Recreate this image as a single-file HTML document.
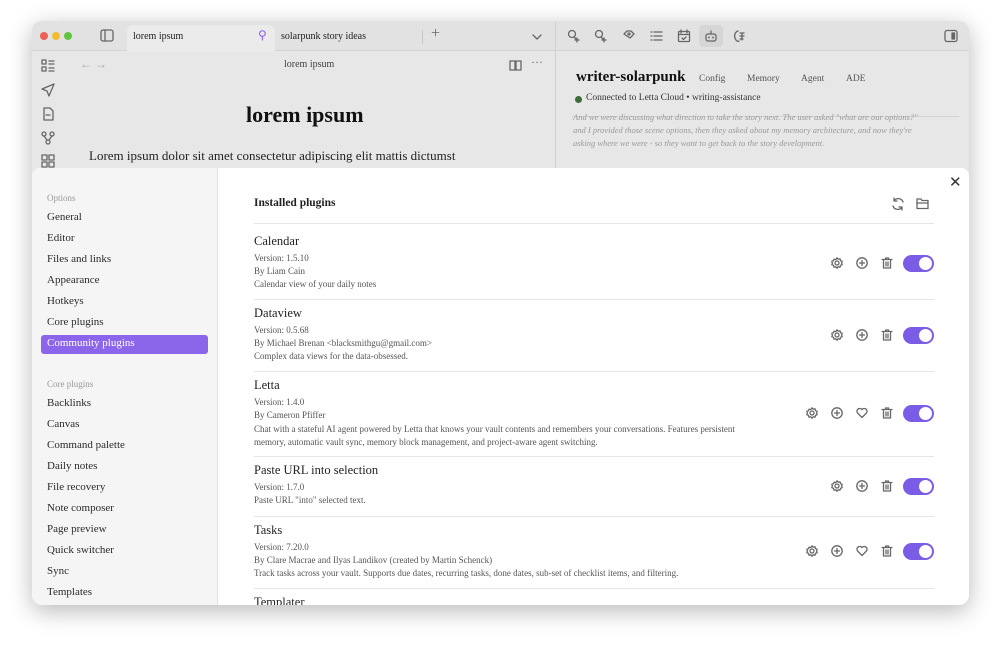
<!DOCTYPE html>
<html><head><meta charset="utf-8">
<style>
*{box-sizing:border-box;margin:0;padding:0}
body{width:1000px;height:648px;background:#fff;font-family:"Liberation Serif",serif;color:#222;position:relative;overflow:hidden}
.win{position:absolute;left:32px;top:21px;width:937px;height:584px;border-radius:10px;background:#e7e7e7;box-shadow:0 6px 24px rgba(0,0,0,.28);overflow:hidden}
.abs{position:absolute}
.t{position:absolute;white-space:nowrap}
svg{position:absolute;fill:none;stroke:#666;stroke-width:1.3;stroke-linecap:round;stroke-linejoin:round}
.modal{position:absolute;left:0;top:147px;width:937px;height:437px;background:#fff;border-radius:8px 8px 0 0;overflow:hidden}
.side{position:absolute;left:0;top:0;width:186px;height:437px;background:#f5f5f5;border-right:1px solid #e2e2e2}
.si{position:absolute;left:15px;font-size:11px;color:#2a2a2a}
.sh{position:absolute;left:15px;font-size:9px;color:#999}
.pt{position:absolute;left:222px;font-size:12.5px;color:#222}
.ps{position:absolute;left:222px;font-size:9px;color:#555;white-space:nowrap}
.ln{position:absolute;left:222px;width:680px;height:1px;background:#e6e6e6}
.tg{position:absolute;left:871px;width:31px;height:17px;border-radius:9px;background:#7b5ce6}
.tg:after{content:"";position:absolute;right:2px;top:2px;width:13px;height:13px;border-radius:50%;background:#fff}
</style></head><body>
<div class="win">
 <div class="abs" style="left:0;top:0;width:937px;height:30px;background:#e2e2e2;border-bottom:1px solid #d4d4d4"></div>
 <div class="abs" style="left:8px;top:11px;width:8px;height:8px;border-radius:50%;background:#ec5f57"></div>
 <div class="abs" style="left:20px;top:11px;width:8px;height:8px;border-radius:50%;background:#f4bd30"></div>
 <div class="abs" style="left:32px;top:11px;width:8px;height:8px;border-radius:50%;background:#5fc640"></div>
 <svg style="left:68px;top:8px" width="14" height="14"><rect x="1" y="1" width="12" height="11" rx="2"/><line x1="5" y1="1" x2="5" y2="12"/></svg>
 <div class="abs" style="left:95px;top:4px;width:148px;height:27px;background:#ebebeb;border-radius:6px 6px 0 0"></div>
 <div class="t" style="left:101px;top:10px;font-size:10px">lorem ipsum</div>
 <div class="t" style="left:226px;top:7px;font-size:12px;color:#8b5cf6">⚲</div>
 <div class="t" style="left:249px;top:10px;font-size:10px">solarpunk story ideas</div>
 <div class="abs" style="left:390px;top:9px;width:1px;height:14px;background:#c8c8c8"></div>
 <div class="t" style="left:399px;top:4px;font-size:16px;color:#666">+</div>
 <svg style="left:500px;top:12px" width="10" height="8"><path d="M1 2l4 4 4-4"/></svg>
 <div class="abs" style="left:523px;top:0;width:1px;height:584px;background:#d2d2d2"></div>
 <svg style="left:535px;top:8px" width="14" height="14"><circle cx="5" cy="5" r="3.5"/><path d="M7 8l3 3M10 9v4M8 11h4"/></svg>
 <svg style="left:562px;top:8px" width="14" height="14"><circle cx="5" cy="5" r="3.5"/><path d="M7 8l3 3M10 9v4M8 11h4"/></svg>
 <svg style="left:590px;top:8px" width="14" height="14"><path d="M2 5l3-3h4l3 3-4 4z"/><circle cx="7" cy="5" r="1"/></svg>
 <svg style="left:617px;top:8px" width="14" height="14"><path d="M2 3h1M5 3h8M2 7h1M5 7h8M2 11h1M5 11h8"/></svg>
 <svg style="left:645px;top:8px" width="14" height="14"><rect x="1.5" y="2.5" width="11" height="10" rx="1"/><path d="M1.5 5.5h11M4 1v3M10 1v3M5 9l1.5 1.5L9 8"/></svg>
 <div class="abs" style="left:667px;top:4px;width:24px;height:22px;background:#d6d6d6;border-radius:4px"></div>
 <svg style="left:672px;top:8px" width="14" height="14"><rect x="2" y="5" width="10" height="7" rx="2"/><path d="M7 2v3M5 8v1M9 8v1"/></svg>
 <svg style="left:700px;top:8px" width="14" height="14"><path d="M6 2C3 3 2 6 3 9s3 4 4 3M8 4h4M8 7h4M8 10h3M10 4v7"/></svg>
 <svg style="left:912px;top:8px" width="14" height="14"><rect x="1" y="1.5" width="12" height="11" rx="2"/><rect x="8" y="4" width="2.5" height="6" fill="#666"/></svg>
 <svg style="left:9px;top:38px" width="14" height="14"><rect x="1" y="1" width="4" height="4"/><rect x="1" y="8" width="4" height="4"/><path d="M8 2h5M8 5h5M8 9h5M8 12h5"/></svg>
 <svg style="left:9px;top:62px" width="14" height="14"><path d="M13 1L1 6l5 2 2 5z"/></svg>
 <svg style="left:9px;top:86px" width="14" height="14"><path d="M3 1h6l3 3v9H3zM5 8h4"/></svg>
 <svg style="left:9px;top:110px" width="14" height="14"><circle cx="3" cy="3" r="2"/><circle cx="11" cy="3" r="2"/><circle cx="7" cy="11" r="2"/><path d="M3 5l3 4M11 5l-3 4"/></svg>
 <svg style="left:9px;top:133px" width="14" height="14"><rect x="1" y="1" width="5" height="5"/><rect x="8" y="1" width="5" height="5"/><rect x="1" y="8" width="5" height="5"/><rect x="8" y="8" width="5" height="5"/></svg>
 <div class="t" style="left:48px;top:36px;font-size:12px;color:#aaa">←  →</div>
 <div class="t" style="left:252px;top:38px;font-size:10px;color:#444">lorem ipsum</div>
 <svg style="left:477px;top:38px" width="14" height="12"><path d="M1 2h5v9H1zM7 2h5v9H7z"/></svg>
 <div class="t" style="left:499px;top:34px;font-size:12px;color:#666">···</div>
 <div class="t" style="left:214px;top:81px;font-size:22px;font-weight:bold;color:#111">lorem ipsum</div>
 <div class="t" style="left:57px;top:127px;font-size:13px;color:#222">Lorem ipsum dolor sit amet consectetur adipiscing elit mattis dictumst</div>
 <div class="t" style="left:544px;top:48px;font-size:15px;font-weight:bold;color:#111">writer-solarpunk</div>
 <div class="t" style="left:667px;top:53px;font-size:9.5px;color:#555">Config</div>
 <div class="t" style="left:715px;top:53px;font-size:9.5px;color:#555">Memory</div>
 <div class="t" style="left:769px;top:53px;font-size:9.5px;color:#555">Agent</div>
 <div class="t" style="left:814px;top:53px;font-size:9.5px;color:#555">ADE</div>
 <div class="abs" style="left:543px;top:75px;width:7px;height:7px;border-radius:50%;background:#3c6b3c"></div>
 <div class="t" style="left:554px;top:72px;font-size:9.5px;color:#333">Connected to Letta Cloud • writing-assistance</div>
 <div class="abs" style="left:540px;top:95px;width:387px;height:1px;background:#d2d2d2"></div>
 <div class="t" style="left:541px;top:90px;font-size:8.5px;font-style:italic;color:#999;line-height:13px">And we were discussing what direction to take the story next. The user asked "what are our options?"<br>and I provided those scene options, then they asked about my memory architecture, and now they're<br>asking where we were - so they want to get back to the story development.</div>

 <div class="modal">
  <div class="side"></div>
  <div class="sh" style="top:25px">Options</div>
  <div class="si" style="top:43px">General</div>
  <div class="si" style="top:64px">Editor</div>
  <div class="si" style="top:85px">Files and links</div>
  <div class="si" style="top:106px">Appearance</div>
  <div class="si" style="top:127px">Hotkeys</div>
  <div class="si" style="top:148px">Core plugins</div>
  <div class="abs" style="left:9px;top:167px;width:167px;height:19px;background:#8c66ea;border-radius:3px"></div>
  <div class="si" style="top:169px;color:#fff">Community plugins</div>
  <div class="sh" style="top:211px">Core plugins</div>
  <div class="si" style="top:229px">Backlinks</div>
  <div class="si" style="top:250px">Canvas</div>
  <div class="si" style="top:271px">Command palette</div>
  <div class="si" style="top:292px">Daily notes</div>
  <div class="si" style="top:313px">File recovery</div>
  <div class="si" style="top:334px">Note composer</div>
  <div class="si" style="top:355px">Page preview</div>
  <div class="si" style="top:376px">Quick switcher</div>
  <div class="si" style="top:397px">Sync</div>
  <div class="si" style="top:418px">Templates</div>
  <div class="t" style="left:917px;top:5px;font-size:15px;color:#333">✕</div>
  <div class="pt" style="top:29px;font-weight:bold;font-size:11.5px">Installed plugins</div>
  <svg style="left:859px;top:29px" width="14" height="14"><path d="M12 5A5 5 0 0 0 3 4M2 9a5 5 0 0 0 9 1M3 1v3h3M11 13v-3H8"/></svg>
  <svg style="left:884px;top:29px" width="14" height="13"><path d="M1 2h4l1 1.5h6v8H1z"/><path d="M1 6h11"/></svg>
  <div class="ln" style="top:55px"></div>
  <div class="pt" style="top:66px">Calendar</div>
  <div class="ps" style="top:85px">Version: 1.5.10</div>
  <div class="ps" style="top:98px">By Liam Cain</div>
  <div class="ps" style="top:111px">Calendar view of your daily notes</div>
  <div class="ln" style="top:131px"></div>
  <div class="pt" style="top:138px">Dataview</div>
  <div class="ps" style="top:157px">Version: 0.5.68</div>
  <div class="ps" style="top:170px">By Michael Brenan &lt;blacksmithgu@gmail.com&gt;</div>
  <div class="ps" style="top:183px">Complex data views for the data-obsessed.</div>
  <div class="ln" style="top:203px"></div>
  <div class="pt" style="top:210px">Letta</div>
  <div class="ps" style="top:229px">Version: 1.4.0</div>
  <div class="ps" style="top:242px">By Cameron Pfiffer</div>
  <div class="ps" style="top:255px;line-height:13px">Chat with a stateful AI agent powered by Letta that knows your vault contents and remembers your conversations. Features persistent<br>memory, automatic vault sync, memory block management, and project-aware agent switching.</div>
  <div class="ln" style="top:288px"></div>
  <div class="pt" style="top:295px">Paste URL into selection</div>
  <div class="ps" style="top:314px">Version: 1.7.0</div>
  <div class="ps" style="top:327px">Paste URL "into" selected text.</div>
  <div class="ln" style="top:348px"></div>
  <div class="pt" style="top:355px">Tasks</div>
  <div class="ps" style="top:374px">Version: 7.20.0</div>
  <div class="ps" style="top:387px">By Clare Macrae and Ilyas Landikov (created by Martin Schenck)</div>
  <div class="ps" style="top:400px">Track tasks across your vault. Supports due dates, recurring tasks, done dates, sub-set of checklist items, and filtering.</div>
  <div class="ln" style="top:420px"></div>
  <div class="pt" style="top:427px">Templater</div>
  <div class="tg" style="top:87px"></div>
  <div class="tg" style="top:159px"></div>
  <div class="tg" style="top:237px"></div>
  <div class="tg" style="top:310px"></div>
  <div class="tg" style="top:375px"></div>
 </div>
</div>
<svg width="0" height="0" style="position:absolute">
 <defs>
  <g id="gear"><circle cx="6" cy="6" r="2"/><path d="M6 .8l1.2 1.4 1.8-.4.5 1.8 1.7.7-.6 1.7.6 1.7-1.7.7-.5 1.8-1.8-.4L6 11.2 4.8 9.8 3 10.2l-.5-1.8L.8 7.7l.6-1.7-.6-1.7 1.7-.7L3 2.2l1.8.4z"/></g>
  <g id="plus"><circle cx="6" cy="6" r="5.2"/><path d="M6 3.5v5M3.5 6h5"/></g>
  <g id="trash"><path d="M1 2.5h10M4.5 2.5V1h3v1.5M2.5 2.5v8.5h7V2.5M5 5v4M7 5v4"/></g>
  <g id="heart"><path d="M6 10.5L1.5 6A2.6 2.6 0 0 1 6 2.6 2.6 2.6 0 0 1 10.5 6z"/></g>
 </defs>
</svg>
<svg style="left:831px;top:257px" width="13" height="13"><use href="#gear"/></svg>
<svg style="left:856px;top:257px" width="13" height="13"><use href="#plus"/></svg>
<svg style="left:881px;top:257px" width="13" height="13"><use href="#trash"/></svg>
<svg style="left:831px;top:329px" width="13" height="13"><use href="#gear"/></svg>
<svg style="left:856px;top:329px" width="13" height="13"><use href="#plus"/></svg>
<svg style="left:881px;top:329px" width="13" height="13"><use href="#trash"/></svg>
<svg style="left:806px;top:407px" width="13" height="13"><use href="#gear"/></svg>
<svg style="left:831px;top:407px" width="13" height="13"><use href="#plus"/></svg>
<svg style="left:856px;top:407px" width="13" height="13"><use href="#heart"/></svg>
<svg style="left:881px;top:407px" width="13" height="13"><use href="#trash"/></svg>
<svg style="left:831px;top:480px" width="13" height="13"><use href="#gear"/></svg>
<svg style="left:856px;top:480px" width="13" height="13"><use href="#plus"/></svg>
<svg style="left:881px;top:480px" width="13" height="13"><use href="#trash"/></svg>
<svg style="left:806px;top:545px" width="13" height="13"><use href="#gear"/></svg>
<svg style="left:831px;top:545px" width="13" height="13"><use href="#plus"/></svg>
<svg style="left:856px;top:545px" width="13" height="13"><use href="#heart"/></svg>
<svg style="left:881px;top:545px" width="13" height="13"><use href="#trash"/></svg>
</body></html>
